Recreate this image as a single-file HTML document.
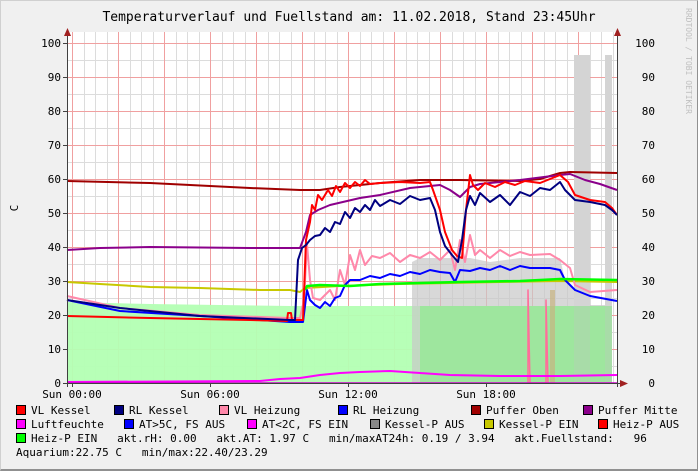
<!DOCTYPE html>
<html><head><meta charset="utf-8"><style>
html,body{margin:0;padding:0;background:#f0f0f0}
body{width:698px;height:471px;overflow:hidden;position:relative;font-family:"DejaVu Sans Mono","Liberation Mono",monospace;color:#000}
.t{position:absolute;font-size:11px;white-space:pre;line-height:12px}
.sw{display:inline-block;width:8px;height:8px;border:1px solid #000;vertical-align:-1px;margin-right:5px}
</style></head><body>
<div style="position:absolute;left:0;top:0;width:696px;height:469px;border-top:1px solid #d0d0d0;border-left:1px solid #d0d0d0;border-right:1px solid #909090;border-bottom:2px solid #909090;box-sizing:border-box;width:698px;height:471px"></div>
<svg width="698" height="471" style="position:absolute;left:0;top:0">
<rect x="67" y="32" width="550" height="351" fill="#fff"/>
<g stroke="#dcdcdc" stroke-width="1">
<path d="M67 366.5H617M67 349.5H617M67 332.5H617M67 315.5H617M67 298.5H617M67 281.5H617M67 264.5H617M67 247.5H617M67 230.5H617M67 213.5H617M67 196.5H617M67 179.5H617M67 162.5H617M67 145.5H617M67 128.5H617M67 111.5H617M67 94.5H617M67 77.5H617M67 60.5H617M67 43.5H617"/>
<path d="M84.5 32V383M95.5 32V383M107.5 32V383M130.5 32V383M141.5 32V383M153.5 32V383M176.5 32V383M187.5 32V383M199.5 32V383M222.5 32V383M233.5 32V383M245.5 32V383M268.5 32V383M279.5 32V383M291.5 32V383M314.5 32V383M325.5 32V383M337.5 32V383M360.5 32V383M371.5 32V383M383.5 32V383M406.5 32V383M417.5 32V383M429.5 32V383M452.5 32V383M463.5 32V383M475.5 32V383M498.5 32V383M509.5 32V383M521.5 32V383M544.5 32V383M555.5 32V383M567.5 32V383M590.5 32V383M601.5 32V383M613.5 32V383"/>
</g>
<g stroke="#f0a0a0" stroke-width="1">
<path d="M67 349.5H617M67 315.5H617M67 281.5H617M67 247.5H617M67 213.5H617M67 179.5H617M67 145.5H617M67 111.5H617M67 77.5H617M67 43.5H617"/>
<path d="M72.5 32V383M118.5 32V383M164.5 32V383M210.5 32V383M256.5 32V383M302.5 32V383M348.5 32V383M394.5 32V383M440.5 32V383M486.5 32V383M532.5 32V383M578.5 32V383"/>
</g>
<!-- green area -->
<path d="M67 383V302L150 304L290 306L612 306V383Z" fill="#b3ffb3" opacity="0.95"/>
<!-- gray areas -->
<path d="M412 383V262L420 258L470 258L490 262L520 258L560 258L565 280L575 292L575 55L590 57L590 305L605 305L605 56L612 55V383Z" fill="#c8c8c8" opacity="0.7"/>
<rect x="420" y="306" width="192" height="77" fill="#9ee69e"/>
<rect x="574" y="55" width="16" height="251" fill="#d4d4d4"/>
<rect x="605" y="55" width="7" height="251" fill="#d4d4d4"/>
<rect x="574" y="306" width="16" height="77" fill="#a8dca8"/>
<rect x="605" y="306" width="7" height="77" fill="#a8dca8"/>
<rect x="550" y="290" width="5" height="93" fill="#c8b480" opacity="0.7"/>
<g fill="none" stroke-width="2" stroke-linejoin="round">
<polyline stroke="#ff6e9a" stroke-width="1.5" points="546,383 546,300 548,383 528,383 528,290 530,383"/>
<polyline stroke="#ff00ff" points="67,382 260,381 280,379 300,378 320,375 340,373 360,372 390,371 420,373 450,375 500,376 560,376 617,375"/>
<polyline stroke="#cc00cc" stroke-width="1.5" points="67,383 617,383"/>
<polyline stroke="#c8c800" points="67,282 100,284 150,287 200,288 260,290 290,290 300,292 305,288 340,286 400,284 450,283 500,282 560,281 617,282"/>
<polyline stroke="#a00000" points="67,181 150,183 250,188 300,190 320,190 340,187 380,183 420,180 460,180 520,181 540,179 560,173 570,172 617,173"/>
<polyline stroke="#8b008b" points="67,250 100,248 150,247 250,248 300,248 303,240 306,232 310,215 318,210 330,205 360,198 380,195 410,188 440,185 450,190 460,197 470,187 480,184 520,180 560,175 570,174 585,180 600,184 617,190"/>
<polyline stroke="#ff88aa" points="67,296 120,308 200,315 290,318 300,318 304,300 307,244 310,280 313,298 320,300 325,295 330,290 335,300 340,270 345,285 350,255 355,270 360,250 365,265 372,256 380,258 390,253 400,262 410,255 420,258 430,252 440,260 450,250 455,270 460,240 465,262 470,235 475,255 480,250 490,258 500,250 510,256 520,252 530,255 550,254 560,260 570,268 575,285 590,292 617,290"/>
<polyline stroke="#0000ff" points="67,300 120,311 200,316 290,322 303,322 307,290 310,300 315,305 320,308 325,302 330,306 335,298 340,296 345,285 350,280 360,280 370,276 380,278 390,274 400,276 410,272 420,274 430,270 440,272 450,273 455,282 460,270 470,271 480,268 490,270 500,266 510,270 520,266 530,268 550,268 560,270 565,280 575,290 590,296 617,301"/>
<polyline stroke="#00ff00" stroke-width="2.5" points="305,290 307,286 320,285 350,286 380,284 420,283 460,282 520,281 560,279 617,280"/>
<polyline stroke="#ff0000" points="67,316 150,318 250,320 287,321 288,313 291,313 292,320 303,320 306,240 310,222 312,205 315,210 318,195 322,200 328,190 332,196 336,186 340,192 345,183 350,188 355,182 360,186 365,180 370,184 380,183 400,182 420,183 430,182 433,190 440,210 445,232 452,250 457,256 462,258 466,210 470,175 473,185 478,190 485,183 495,187 505,182 515,185 525,181 540,183 560,175 568,182 575,195 590,200 605,202 612,208 617,215"/>
<polyline stroke="#000080" points="67,300 120,308 200,316 290,320 295,320 298,260 302,248 306,245 310,240 315,236 320,235 325,228 330,232 335,222 340,224 345,212 350,218 355,208 360,212 365,205 370,210 375,200 380,206 390,200 400,204 410,196 420,200 430,198 435,210 440,232 445,246 452,255 458,262 462,240 466,210 470,196 475,205 480,193 490,202 500,195 510,205 520,192 530,196 540,188 550,190 560,182 565,190 575,200 590,202 605,205 612,210 617,215"/>
</g>
<line x1="67.5" y1="36" x2="67.5" y2="387" stroke="#404040"/>
<line x1="617.5" y1="36" x2="617.5" y2="387" stroke="#404040"/>
<line x1="63" y1="383.5" x2="624" y2="383.5" stroke="#404040"/>
<path d="M64 36L67.5 28L71 36Z M614 36L617.5 28L621 36Z M620 380L628 383.5L620 387Z" fill="#a02020"/>
<g stroke="#404040"><path d="M63 349.5H67M63 315.5H67M63 281.5H67M63 247.5H67M63 213.5H67M63 179.5H67M63 145.5H67M63 111.5H67M63 77.5H67M63 43.5H67M72.5 383V387M210.5 383V387M348.5 383V387M486.5 383V387"/></g>
<g font-family="DejaVu Sans Mono,Liberation Mono,monospace" font-size="11" fill="#000" text-anchor="end">
<text x="61" y="387">0</text><text x="61" y="353">10</text><text x="61" y="319">20</text><text x="61" y="285">30</text><text x="61" y="251">40</text><text x="61" y="217">50</text><text x="61" y="183">60</text><text x="61" y="149">70</text><text x="61" y="115">80</text><text x="61" y="81">90</text><text x="61" y="47">100</text>
</g>
<g font-family="DejaVu Sans Mono,Liberation Mono,monospace" font-size="11" fill="#000" text-anchor="end">
<text x="655" y="387">0</text><text x="655" y="353">10</text><text x="655" y="319">20</text><text x="655" y="285">30</text><text x="655" y="251">40</text><text x="655" y="217">50</text><text x="655" y="183">60</text><text x="655" y="149">70</text><text x="655" y="115">80</text><text x="655" y="81">90</text><text x="655" y="47">100</text>
</g>
<g font-family="DejaVu Sans Mono,Liberation Mono,monospace" font-size="11" fill="#000" text-anchor="middle">
<text x="72" y="398">Sun 00:00</text><text x="210" y="398">Sun 06:00</text><text x="348" y="398">Sun 12:00</text><text x="486" y="398">Sun 18:00</text>
</g>
<text x="18" y="208" font-family="DejaVu Sans Mono,monospace" font-size="11" transform="rotate(-90 18 208)" text-anchor="middle">C</text>
<text x="349" y="21" font-family="DejaVu Sans Mono,monospace" font-size="13" text-anchor="middle">Temperaturverlauf und Fuellstand am: 11.02.2018, Stand 23:45Uhr</text>
<text x="686" y="8" font-family="DejaVu Sans Mono,monospace" font-size="8" fill="#c0c0c0" transform="rotate(90 686 8)">RRDTOOL / TOBI OETIKER</text>
</svg>
<div class="t" style="left:16px;top:405px"><span class="sw" style="background:#f00"></span>VL Kessel</div>
<div class="t" style="left:114px;top:405px"><span class="sw" style="background:#000080"></span>RL Kessel</div>
<div class="t" style="left:219px;top:405px"><span class="sw" style="background:#ff88aa"></span>VL Heizung</div>
<div class="t" style="left:338px;top:405px"><span class="sw" style="background:#00f"></span>RL Heizung</div>
<div class="t" style="left:471px;top:405px"><span class="sw" style="background:#a00000"></span>Puffer Oben</div>
<div class="t" style="left:583px;top:405px"><span class="sw" style="background:#8b008b"></span>Puffer Mitte</div>
<div class="t" style="left:16px;top:419px"><span class="sw" style="background:#f0f"></span>Luftfeuchte</div>
<div class="t" style="left:124px;top:419px"><span class="sw" style="background:#00f"></span>AT&gt;5C, FS AUS</div>
<div class="t" style="left:247px;top:419px"><span class="sw" style="background:#f0f"></span>AT&lt;2C, FS EIN</div>
<div class="t" style="left:370px;top:419px"><span class="sw" style="background:#888"></span>Kessel-P AUS</div>
<div class="t" style="left:484px;top:419px"><span class="sw" style="background:#c8c800"></span>Kessel-P EIN</div>
<div class="t" style="left:598px;top:419px"><span class="sw" style="background:#f00"></span>Heiz-P AUS</div>
<div class="t" style="left:16px;top:433px"><span class="sw" style="background:#0f0"></span>Heiz-P EIN   akt.rH: 0.00   akt.AT: 1.97 C   min/maxAT24h: 0.19 / 3.94   akt.Fuellstand:   96</div>
<div class="t" style="left:16px;top:447px">Aquarium:22.75 C   min/max:22.40/23.29</div>
</body></html>
